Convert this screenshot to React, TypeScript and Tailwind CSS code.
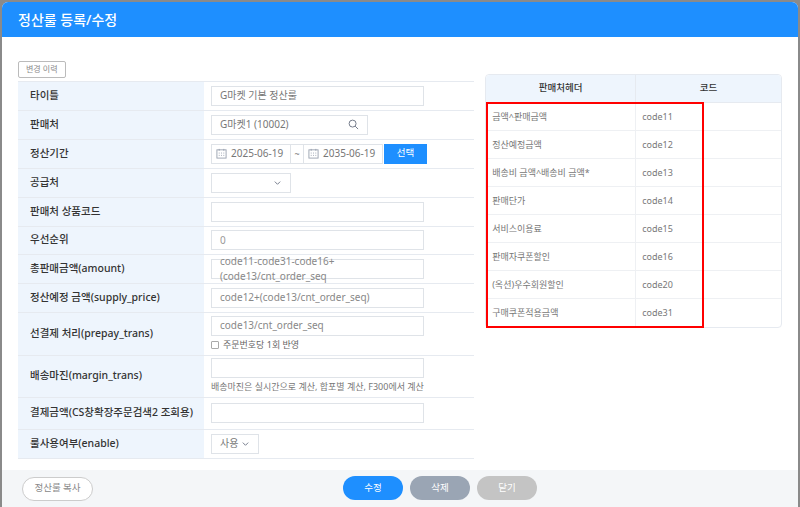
import React from "react";

const font = { fontFamily: '"Noto Sans", "Noto Sans CJK KR", sans-serif' };

function Cal() {
  return (
    <svg width="11" height="11" viewBox="0 0 12 12" className="text-gray-400 shrink-0">
      <rect x="1" y="2" width="10" height="9" fill="none" stroke="currentColor" />
      <line x1="3.5" y1="1" x2="3.5" y2="3" stroke="currentColor" />
      <line x1="8.5" y1="1" x2="8.5" y2="3" stroke="currentColor" />
      <g fill="currentColor">
        <rect x="3" y="5" width="1" height="1" /><rect x="5.5" y="5" width="1" height="1" /><rect x="8" y="5" width="1" height="1" />
        <rect x="3" y="7.5" width="1" height="1" /><rect x="5.5" y="7.5" width="1" height="1" /><rect x="8" y="7.5" width="1" height="1" />
      </g>
    </svg>
  );
}

function Chevron() {
  return (
    <svg width="9" height="9" viewBox="0 0 10 10" className="text-gray-500">
      <path d="M2 4l3 3 3-3" fill="none" stroke="currentColor" strokeWidth="1" />
    </svg>
  );
}

const inputCls = "h-[20px] border border-[#dfe3e8] bg-white px-2 flex items-center text-[10px] text-[#777]";

function Row({ label, h = "h-[29px]", children }: { label: string; h?: string; children?: React.ReactNode }) {
  return (
    <div className={`flex ${h} border-b border-[#e6eaf0]`}>
      <div className="w-[186px] bg-[#eef5fd] flex items-center pl-3 text-[10.5px] text-[#333] font-medium">{label}</div>
      <div className="flex-1 flex flex-col justify-center pl-[7px]">{children}</div>
    </div>
  );
}

const codes: [string, string][] = [
  ["금액^판매금액", "code11"],
  ["정산예정금액", "code12"],
  ["배송비 금액^배송비 금액*", "code13"],
  ["판매단가", "code14"],
  ["서비스이용료", "code15"],
  ["판매자쿠폰할인", "code16"],
  ["(옥션)우수회원할인", "code20"],
  ["구매쿠폰적용금액", "code31"],
];

export default function App() {
  return (
    <div className="w-[800px] h-[507px] bg-[#8a8a8a] pt-[2px] px-[2px] overflow-hidden" style={font}>
      <div className="h-[505px] bg-white rounded-t-[6px] flex flex-col overflow-hidden">
        <div className="h-[35px] bg-[#1e8fff] flex items-center px-[16px] text-white text-[14px] font-medium">정산룰 등록/수정</div>
        <div className="flex-1 flex px-[16px] pt-[17px] gap-[11px]">
          <div className="w-[458px]">
            <button className="h-[17px] px-[7px] border border-[#bbb] rounded-[2px] text-[8px] text-[#888] bg-white mb-[3px]">변경 이력</button>
            <div className="border-t border-[#e6eaf0]">
              <Row label="타이틀"><div className={`${inputCls} w-[213px]`}>G마켓 기본 정산룰</div></Row>
              <Row label="판매처">
                <div className={`${inputCls} w-[157px] justify-between text-[#555]`}>
                  G마켓1 (10002)
                  <svg width="11" height="11" viewBox="0 0 12 12" className="text-gray-500"><circle cx="5" cy="5" r="3.8" fill="none" stroke="currentColor" /><line x1="7.8" y1="7.8" x2="11" y2="11" stroke="currentColor" /></svg>
                </div>
              </Row>
              <Row label="정산기간">
                <div className="flex items-center">
                  <div className={`${inputCls} w-[80px] gap-1 px-[4px]`}><Cal />2025-06-19</div>
                  <div className="h-[20px] w-[12px] border-y border-[#dfe3e8] text-[9px] text-[#777] flex items-center justify-center">~</div>
                  <div className={`${inputCls} w-[80px] gap-1 px-[4px]`}><Cal />2035-06-19</div>
                  <div className="h-[20px] w-[43px] ml-[1px] bg-[#1e8fff] text-white text-[9.5px] flex items-center justify-center">선택</div>
                </div>
              </Row>
              <Row label="공급처"><div className={`${inputCls} w-[80px] justify-end pr-[8px]`}><Chevron /></div></Row>
              <Row label="판매처 상품코드"><div className={`${inputCls} w-[213px]`} /></Row>
              <Row label="우선순위" h="h-[28px]"><div className={`${inputCls} w-[213px] text-[#999]`}>0</div></Row>
              <Row label="총판매금액(amount)"><div className={`${inputCls} w-[213px] text-[#888]`}>code11-code31-code16+(code13/cnt_order_seq</div></Row>
              <Row label="정산예정 금액(supply_price)"><div className={`${inputCls} w-[213px] text-[#888]`}>code12+(code13/cnt_order_seq)</div></Row>
              <Row label="선결제 처리(prepay_trans)" h="h-[43px]">
                <div className={`${inputCls} w-[213px] text-[#888]`}>code13/cnt_order_seq</div>
                <div className="flex items-center gap-[4px] mt-[2px] text-[9px] text-[#666]">
                  <span className="w-[8px] h-[8px] border border-[#aaa] rounded-[1px] bg-white" />주문번호당 1회 반영
                </div>
              </Row>
              <Row label="배송마진(margin_trans)" h="h-[42px]">
                <div className={`${inputCls} w-[213px]`} />
                <div className="mt-[2px] text-[9px] text-[#777]">배송마진은 실시간으로 계산, 합포별 계산, F300에서 계산</div>
              </Row>
              <Row label="결제금액(CS창확장주문검색2 조회용)" h="h-[32px]"><div className={`${inputCls} w-[213px]`} /></Row>
              <Row label="룰사용여부(enable)"><div className={`${inputCls} w-[48px] justify-between text-[#777]`}>사용<Chevron /></div></Row>
            </div>
          </div>
          <div className="w-[298px] mt-[20px] self-start border border-[#e6eaf0] rounded-[4px] relative">
            <div className="flex h-[28px] bg-[#eef5fd] rounded-t-[4px] text-[9.5px] text-[#333] font-medium border-b border-[#e6eaf0]">
              <div className="w-[150px] flex items-center justify-center border-r border-[#e6eaf0]">판매처헤더</div>
              <div className="flex-1 flex items-center justify-center">코드</div>
            </div>
            {codes.map(([a, b], i) => (
              <div key={b} className={`flex h-[28px] text-[9px] text-[#777] ${i < codes.length - 1 ? "border-b border-[#eef0f3]" : ""}`}>
                <div className="w-[150px] flex items-center pl-[6px] border-r border-[#eef0f3]">{a}</div>
                <div className="flex-1 flex items-center pl-[6px]">{b}</div>
              </div>
            ))}
            <div className="absolute left-0 top-[27px] w-[218px] h-[226px] border-2 border-[#ff0000]" />
          </div>
        </div>
        <div className="h-[37px] bg-[#f4f6f8] flex items-center px-[20px] relative">
          <button className="h-[24px] w-[71px] rounded-full border border-[#ccc] bg-white text-[9.5px] text-[#888]">정산룰 복사</button>
          <div className="absolute left-[341px] top-[6px] flex gap-[7px]">
            <button className="h-[24px] w-[60px] rounded-full bg-[#1e8fff] text-white text-[9.5px]">수정</button>
            <button className="h-[24px] w-[60px] rounded-full bg-[#9aa5b4] text-white text-[9.5px]">삭제</button>
            <button className="h-[24px] w-[60px] rounded-full bg-[#c4c4c4] text-white text-[9.5px]">닫기</button>
          </div>
        </div>
      </div>
    </div>
  );
}
